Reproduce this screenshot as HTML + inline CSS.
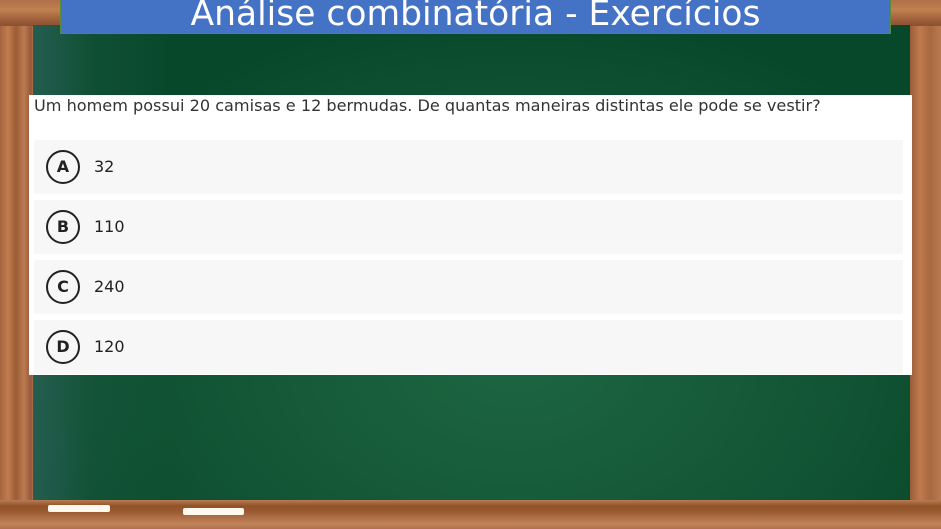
<!DOCTYPE html>
<html><head><meta charset="utf-8"><style>
*{margin:0;padding:0;box-sizing:border-box}
body{width:941px;height:529px;overflow:hidden;position:relative;font-family:"DejaVu Sans","Liberation Sans",sans-serif;
background:linear-gradient(90deg,#9a5f3c 0,#c07a4a 6px,#a2633c 12px,#b4764c 20px,#8e5430 28px,#b0744c 33px);}
.frame{position:absolute;inset:0;background:linear-gradient(90deg,#a4653f 0,#c27c4c 8px,#9b5c36 16px,#bb7a50 24px,#94583a 31px,transparent 33px,transparent 908px,#9a5c38 910px,#c07a4c 920px,#a8683f 930px,#b97a52 941px);}
.topwood{position:absolute;left:0;right:0;top:0;height:26px;background:linear-gradient(180deg,#b0704a,#c0804f 10px,#9c5e3a 20px,#8a5030 26px)}
.board{position:absolute;left:33px;top:25px;width:877px;height:476px;
background:radial-gradient(ellipse at 55% 70%,#1d6642 0,#145737 40%,#08482a 75%),#0f5133;}
.board:before{content:"";position:absolute;inset:0;background:linear-gradient(90deg,rgba(60,110,110,.55) 0,rgba(40,100,80,.25) 60px,transparent 140px)}
.ledge{position:absolute;left:0;right:0;top:500px;height:29px;background:linear-gradient(180deg,#b77d58 0,#a5663c 3px,#8f5226 6px,#9b5b30 12px,#b0704a 18px,#c08458 24px,#b07050 29px)}
.chalk{position:absolute;height:7px;background:#fff8ef;border-radius:2px}
.title{position:absolute;left:60px;top:-2px;width:831px;height:36px;background:#4472c4;border:1px solid #5a8a3a;color:#fff;font-size:34.5px;text-align:center;line-height:30px;white-space:nowrap}
.panel{position:absolute;left:29px;top:95px;width:883px;height:280px;background:#fff}
.q{position:absolute;left:5px;top:1px;font-size:16.1px;color:#333;white-space:nowrap}
.opt{position:absolute;left:5px;width:869px;height:54px;background:#f7f7f7;border-radius:2px}
.c{position:absolute;left:12px;top:10px;width:34px;height:34px;border:2px solid #222;border-radius:50%;text-align:center;line-height:30px;font-weight:bold;font-size:16px;color:#222}
.t{position:absolute;left:60px;top:17px;font-size:16px;color:#222}
</style></head><body>
<div class="frame"></div>
<div class="topwood"></div>
<div class="board"></div>
<div class="ledge"></div>
<div class="chalk" style="left:48px;top:505px;width:62px"></div>
<div class="chalk" style="left:183px;top:508px;width:61px"></div>
<div class="title">Análise combinatória - Exercícios</div>
<div class="panel">
<div class="q">Um homem possui 20 camisas e 12 bermudas. De quantas maneiras distintas ele pode se vestir?</div>
<div class="opt" style="top:45px"><div class="c">A</div><div class="t">32</div></div>
<div class="opt" style="top:105px"><div class="c">B</div><div class="t">110</div></div>
<div class="opt" style="top:165px"><div class="c">C</div><div class="t">240</div></div>
<div class="opt" style="top:225px"><div class="c">D</div><div class="t">120</div></div>
</div>
</body></html>
